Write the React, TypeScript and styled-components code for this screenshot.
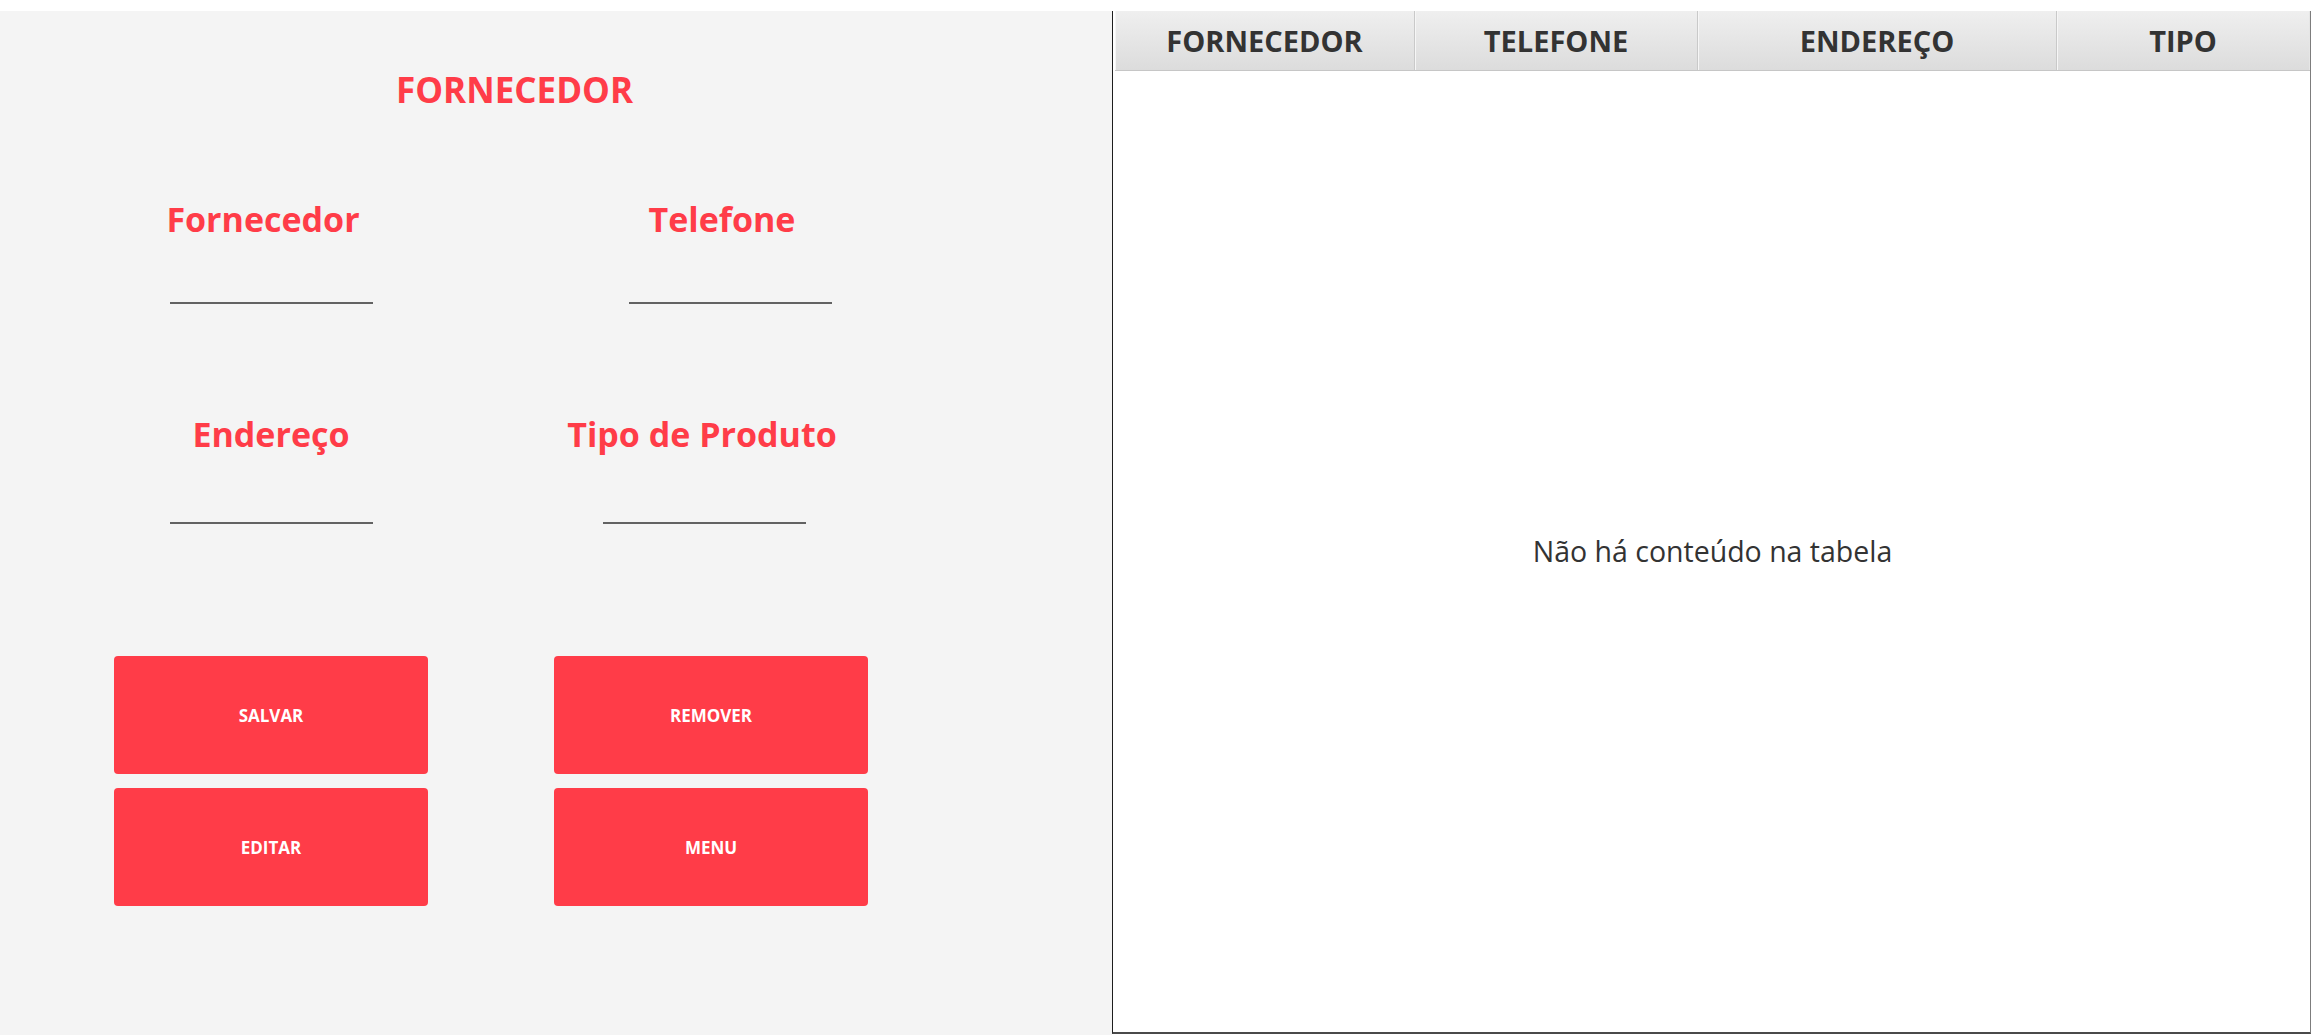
import React from "react";
import styled, { createGlobalStyle } from "styled-components";

const GlobalStyle = createGlobalStyle`
  html, body {
    margin: 0;
    padding: 0;
    background: #ffffff;
    font-family: "Open Sans", "Noto Sans", sans-serif;
  }
  * { box-sizing: border-box; }
`;

const RED = "#ff3c48";

const Page = styled.div`
  display: flex;
  width: 2311px;
  height: 1035px;
  padding-top: 11px;
  background: #ffffff;
  overflow: hidden;
`;

const FormPanel = styled.section`
  width: 1112px;
  flex-shrink: 0;
  background: #f4f4f4;
  display: flex;
  flex-direction: column;
  padding-top: 61px;
`;

const Title = styled.h1`
  margin: 0;
  padding-left: 396px;
  font: 700 35px/35px "Open Sans", sans-serif;
  color: ${RED};
`;

const TwoColumnGrid = styled.div<{ $top: number }>`
  display: grid;
  grid-template-columns: 314px 314px;
  column-gap: 126px;
  padding-left: 114px;
  margin-top: ${(p) => p.$top}px;
`;

const Field = styled.div`
  display: flex;
  flex-direction: column;
  align-items: center;
`;

const Label = styled.label<{ $dx: number }>`
  font: 700 34px/34px "Open Sans", sans-serif;
  color: ${RED};
  white-space: nowrap;
  transform: translateX(${(p) => p.$dx}px);
`;

const LineInput = styled.input<{ $dx: number; $gap: number }>`
  width: 203px;
  height: 32px;
  margin-top: ${(p) => p.$gap}px;
  border: none;
  border-bottom: 2px solid #626262;
  background: transparent;
  outline: none;
  font: 400 20px "Open Sans", sans-serif;
  transform: translateX(${(p) => p.$dx}px);
`;

const ButtonGrid = styled.div`
  display: grid;
  grid-template-columns: 314px 314px;
  grid-auto-rows: 118px;
  column-gap: 126px;
  row-gap: 14px;
  padding-left: 114px;
  margin-top: 132px;
`;

const ActionButton = styled.button`
  border: none;
  border-radius: 4px;
  background: ${RED};
  color: #ffffff;
  font: 700 17px "Open Sans", sans-serif;
  cursor: pointer;
`;

const TablePanel = styled.section`
  flex: 1;
  display: flex;
  flex-direction: column;
  background: #ffffff;
  border-left: 1px solid #1e1e1e;
  border-right: 1px solid #7d7d7d;
  border-bottom: 2px solid #4a4a4a;
  padding-left: 2px;
  height: 1023px;
`;

const HeaderRow = styled.div`
  display: grid;
  grid-template-columns: 300px 283px 359px 1fr;
  height: 60px;
  flex-shrink: 0;
  background: linear-gradient(#efefef, #dcdcdc);
  border-bottom: 1px solid #c6c6c6;
`;

const HeaderCell = styled.div<{ $last?: boolean }>`
  display: flex;
  align-items: center;
  justify-content: center;
  font: 700 29px "Open Sans", sans-serif;
  color: #333333;
  border-right: 1px solid ${(p) => (p.$last ? "#e6e6e6" : "#c9c9c9")};
  box-shadow: inset 1px 0 0 #f6f6f6;
`;

const EmptyBody = styled.div`
  flex: 1;
  display: flex;
  align-items: center;
  justify-content: center;
  font: 400 28.5px "Open Sans", sans-serif;
  color: #333333;
  padding-bottom: 2px;
`;

const fieldsRow1 = [
  { label: "Fornecedor", labelDx: -8, lineDx: 0, gap: 36 },
  { label: "Telefone", labelDx: 11, lineDx: 19, gap: 36 },
];
const fieldsRow2 = [
  { label: "Endereço", labelDx: 0, lineDx: 0, gap: 41 },
  { label: "Tipo de Produto", labelDx: -9, lineDx: -7, gap: 41 },
];

const columns = ["FORNECEDOR", "TELEFONE", "ENDEREÇO", "TIPO"];

export default function App() {
  return (
    <>
      <GlobalStyle />
      <Page>
        <FormPanel>
          <Title>FORNECEDOR</Title>
          <TwoColumnGrid $top={95}>
            {fieldsRow1.map((f) => (
              <Field key={f.label}>
                <Label $dx={f.labelDx}>{f.label}</Label>
                <LineInput $dx={f.lineDx} $gap={f.gap} />
              </Field>
            ))}
          </TwoColumnGrid>
          <TwoColumnGrid $top={113}>
            {fieldsRow2.map((f) => (
              <Field key={f.label}>
                <Label $dx={f.labelDx}>{f.label}</Label>
                <LineInput $dx={f.lineDx} $gap={f.gap} />
              </Field>
            ))}
          </TwoColumnGrid>
          <ButtonGrid>
            <ActionButton>SALVAR</ActionButton>
            <ActionButton>REMOVER</ActionButton>
            <ActionButton>EDITAR</ActionButton>
            <ActionButton>MENU</ActionButton>
          </ButtonGrid>
        </FormPanel>
        <TablePanel>
          <HeaderRow>
            {columns.map((c, i) => (
              <HeaderCell key={c} $last={i === columns.length - 1}>
                {c}
              </HeaderCell>
            ))}
          </HeaderRow>
          <EmptyBody>Não há conteúdo na tabela</EmptyBody>
        </TablePanel>
      </Page>
    </>
  );
}
